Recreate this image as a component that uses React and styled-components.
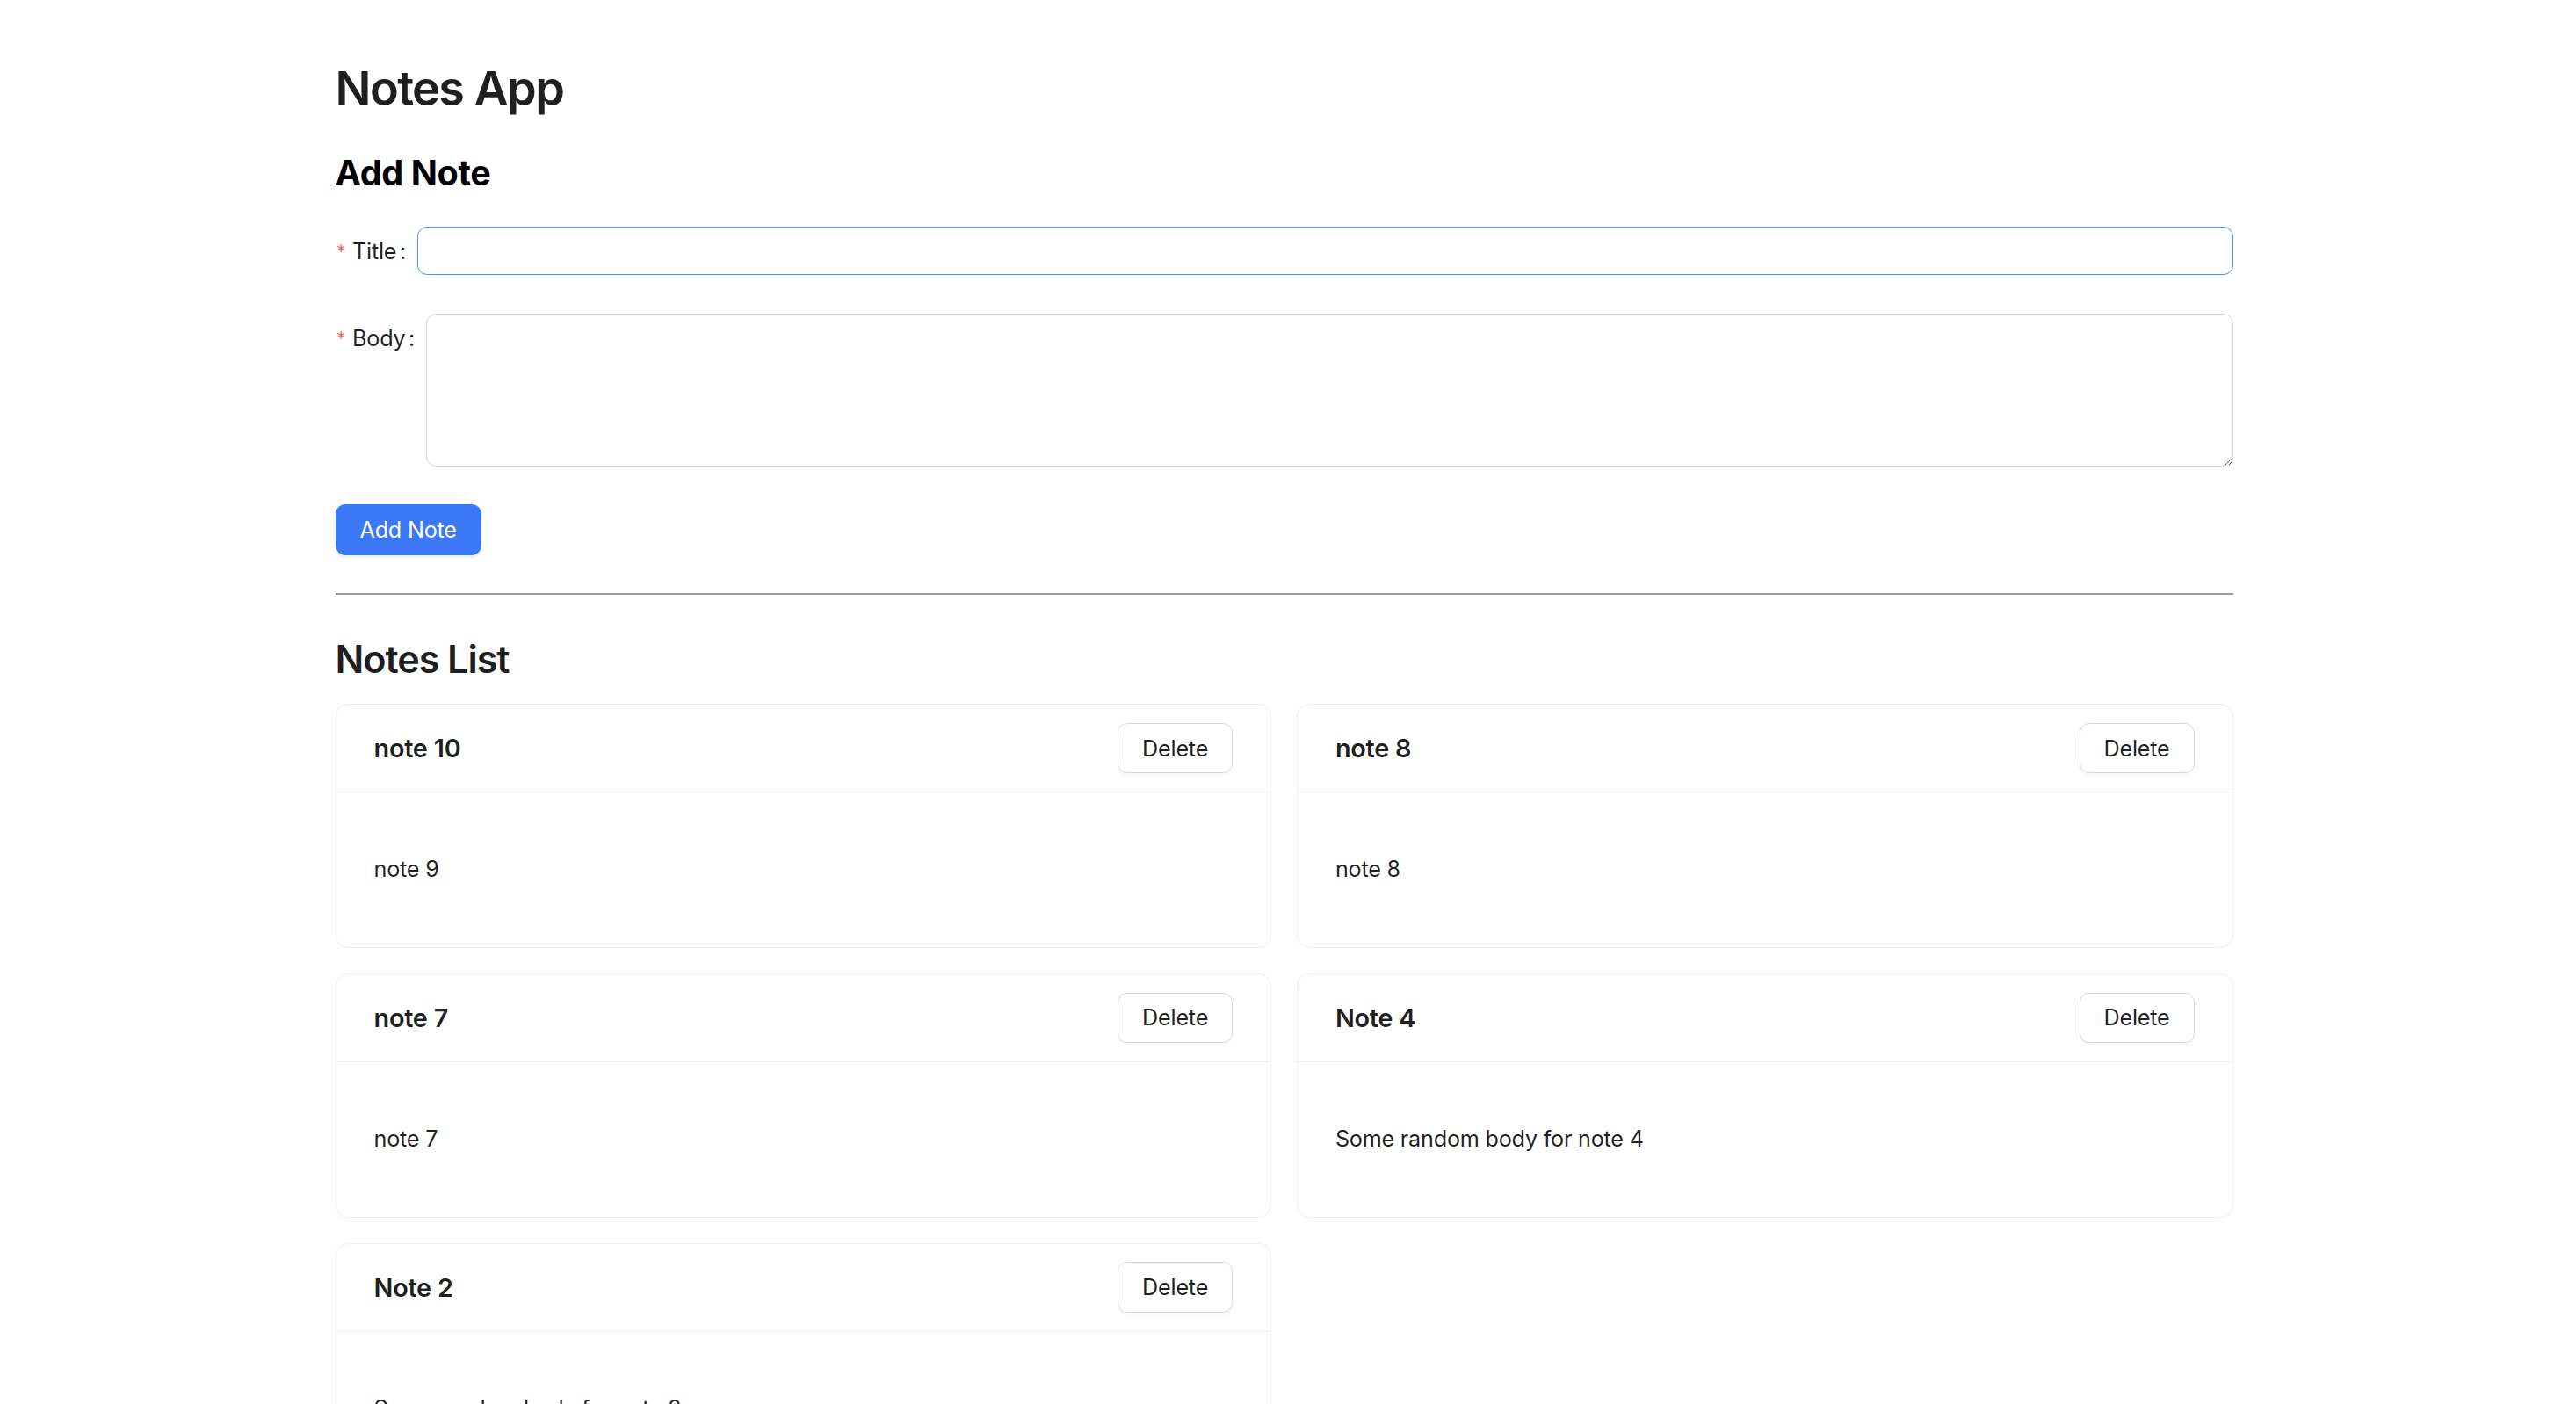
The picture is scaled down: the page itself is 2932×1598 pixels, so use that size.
import React, { useState } from 'react'
import styled, { createGlobalStyle } from 'styled-components'

const GlobalStyle = createGlobalStyle`
  * { box-sizing: border-box; }
  body {
    margin: 0;
    background: #fff;
    font-family: Inter, "Noto Sans", "Liberation Sans", sans-serif;
    letter-spacing: -0.014em;
    color: rgba(0, 0, 0, 0.88);
  }
`

const Page = styled.div`
  display: flex;
  justify-content: center;
  padding: 65px 9px 0 0;
`

const Container = styled.div`
  width: 2160px;
`

const AppTitle = styled.h1`
  margin: 0 0 36px;
  font-size: 54px;
  line-height: 72px;
  font-weight: 600;
  letter-spacing: -0.03em;
  color: rgba(0, 0, 0, 0.88);
`

const FormHeading = styled.h2`
  margin: 0 0 37px;
  font-size: 39.6px;
  line-height: 48px;
  font-weight: 700;
  letter-spacing: -0.01em;
  color: #000;
`

const FormItem = styled.div`
  display: flex;
  align-items: flex-start;
  margin-bottom: 43px;
`

const Label = styled.label`
  display: flex;
  align-items: center;
  height: 56px;
  font-size: 25.2px;
  white-space: nowrap;
  color: rgba(0, 0, 0, 0.88);

  &::after {
    content: ':';
    margin: 0 13px 0 3.6px;
  }
`

const Star = styled.span`
  color: #ff4d4f;
  font-size: 25.2px;
  font-family: "DejaVu Sans", sans-serif;
  margin-right: 7.2px;
  line-height: 1;
  transform: scale(0.75);
`

const TextInput = styled.input`
  flex: 1;
  height: 55px;
  padding: 7px 20px;
  font: inherit;
  font-size: 25.2px;
  border: 1.8px solid ${p => (p.$focused ? '#4096ff' : '#d9d9d9')};
  border-radius: 11px;
  outline: none;
  background: #fff;
`

const TextArea = styled.textarea`
  flex: 1;
  height: 174px;
  padding: 7px 20px;
  font: inherit;
  font-size: 25.2px;
  border: 1.8px solid #d9d9d9;
  border-radius: 11px;
  outline: none;
  resize: vertical;
`

const Button = styled.button`
  height: 57.6px;
  padding: 0 27px;
  font-family: inherit;
  font-size: 25.2px;
  letter-spacing: inherit;
  border-radius: 10.8px;
  cursor: pointer;
  border: 1.8px solid ${p => (p.$primary ? '#3c78f5' : '#d9d9d9')};
  background: ${p => (p.$primary ? '#3c78f5' : '#fff')};
  color: ${p => (p.$primary ? '#fff' : 'rgba(0, 0, 0, 0.88)')};
  box-shadow: ${p => (p.$primary ? '0 3.6px 0 rgba(5, 145, 255, 0.1)' : '0 3.6px 0 rgba(0, 0, 0, 0.02)')};
`

const Divider = styled.hr`
  margin: 43px 0 45px;
  border: none;
  border-top: 2px solid #9b9b9b;
`

const ListHeading = styled.h3`
  margin: 0 0 22px;
  font-size: 43.2px;
  line-height: 57.6px;
  font-weight: 600;
  letter-spacing: -0.025em;
  color: rgba(0, 0, 0, 0.88);
`

const Grid = styled.div`
  display: grid;
  grid-template-columns: 1fr 1fr;
  gap: 28.8px;
`

const Card = styled.div`
  border: 1.8px solid #f0f0f0;
  border-radius: 14.4px;
  background: #fff;
`

const CardHead = styled.div`
  display: flex;
  align-items: center;
  justify-content: space-between;
  height: 100px;
  padding: 0 43px;
  border-bottom: 1.8px solid #f0f0f0;
`

const CardTitle = styled.div`
  font-size: 28.8px;
  font-weight: 600;
  color: rgba(0, 0, 0, 0.88);
`

const CardBody = styled.div`
  padding: 43px;
`

const BodyText = styled.p`
  margin: 25.2px 0;
  font-size: 25.2px;
  line-height: 39.6px;
`

const notes = [
  { id: 10, title: 'note 10', body: 'note 9' },
  { id: 8, title: 'note 8', body: 'note 8' },
  { id: 7, title: 'note 7', body: 'note 7' },
  { id: 4, title: 'Note 4', body: 'Some random body for note 4' },
  { id: 2, title: 'Note 2', body: 'Some random body for note 2' },
]

const App = () => {
  const [title, setTitle] = useState('')
  const [body, setBody] = useState('')

  return (
    <Page>
      <GlobalStyle />
      <Container>
        <AppTitle>Notes App</AppTitle>
        <FormHeading>Add Note</FormHeading>

        <FormItem>
          <Label><Star>*</Star>Title</Label>
          <TextInput $focused value={title} onChange={e => setTitle(e.target.value)} />
        </FormItem>
        <FormItem>
          <Label><Star>*</Star>Body</Label>
          <TextArea value={body} onChange={e => setBody(e.target.value)} />
        </FormItem>
        <Button $primary>Add Note</Button>

        <Divider />

        <ListHeading>Notes List</ListHeading>
        <Grid>
          {notes.map(n => (
            <Card key={n.id}>
              <CardHead>
                <CardTitle>{n.title}</CardTitle>
                <Button>Delete</Button>
              </CardHead>
              <CardBody>
                <BodyText>{n.body}</BodyText>
              </CardBody>
            </Card>
          ))}
        </Grid>
      </Container>
    </Page>
  )
}

export default App
